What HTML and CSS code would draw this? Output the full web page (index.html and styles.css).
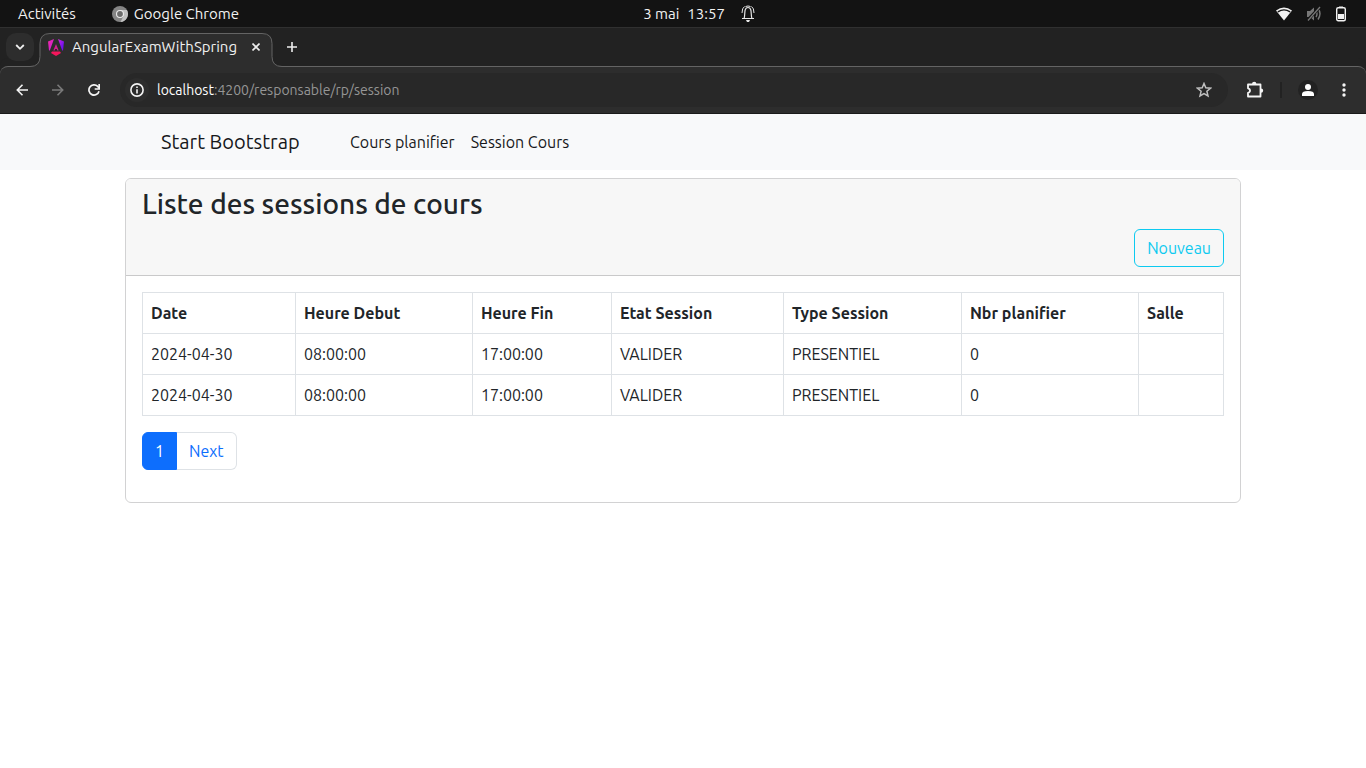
FILE: index.html
```html
<!DOCTYPE html>
<html lang="fr">
<head>
<meta charset="utf-8">
<meta name="viewport" content="width=device-width, initial-scale=1">
<title>AngularExamWithSpring</title>
<link rel="stylesheet" href="styles.css">
</head>
<body>
<header class="topbar">
  <div class="topbar-left">
    <button class="plain" type="button">Activités</button>
    <button class="plain app-menu" type="button">
      <svg width="16" height="16" viewBox="0 0 16 16"><circle cx="8" cy="8" r="8" fill="#858585"/><path d="M8 4h6.900a8 8 0 0 1-6.400 12l3-6z" fill="#c2c2c2"/><circle cx="8" cy="8" r="4" fill="#ececec"/><circle cx="8" cy="8" r="2.900" fill="#6c6c6c"/></svg>
      <span>Google Chrome</span>
    </button>
  </div>
  <button class="plain clock" type="button">
    <span>3 mai</span><span>13:57</span>
    <svg class="bell" width="14" height="18" viewBox="0 0 14 18" fill="none" stroke="#e6e6e6"><path d="M1 13.500h12M3 13.500c1-2 .5-7 1.300-9C4.800 3 6 2.500 7 2.500S9.200 3 9.700 4.500c.8 2 .3 7 1.300 9" stroke-width="1.200"/><path d="M3.500 1.500Q1 3 1 8M10.500 1.500Q13 3 13 8M4.500 1.500Q7 .5 9.500 1.500"/><path d="M5 15h4l-1 2H6z" fill="#e6e6e6" stroke="none"/></svg>
  </button>
  <div class="status">
    <svg width="16" height="14" viewBox="0 0 16 14"><path d="M0 3.500Q8-2.500 16 3.500L8 13.500z" fill="#f2f2f2"/><path d="M1.800 4.900Q8 .8 14.200 4.900" fill="none" stroke="#131313" stroke-width="1.300"/></svg>
    <svg width="16" height="16" viewBox="0 0 16 16"><path d="M1 5h3l4-3.500v13L4 11H1z" fill="#777"/><path d="M10 5q2 3 0 6M12 2.500q4 5 0 11" fill="none" stroke="#777" stroke-width="1.400"/><path d="M14 1L1 15" stroke="#131313" stroke-width="3"/><path d="M14 1L2 14.500" stroke="#777" stroke-width="1.300"/></svg>
    <svg width="10" height="16" viewBox="0 0 10 16"><path d="M3 .5h4V2H3z" fill="#f2f2f2"/><rect x=".7" y="1.700" width="8.600" height="13" rx="1.500" fill="none" stroke="#f2f2f2" stroke-width="1.400"/><path d="M2 8h6v5H2z" fill="#f2f2f2"/></svg>
  </div>
</header>

<div class="tabstrip">
  <button class="plain tab-search" type="button" aria-label="Rechercher dans les onglets">
    <svg width="10" height="8" viewBox="0 0 10 8" fill="none" stroke="#eee" stroke-width="1.800"><path d="M1.200 2L5 5.800 8.800 2"/></svg>
  </button>
  <div class="tab">
    <svg class="tab-shape" width="256" height="34" viewBox="0 0 256 34"><path d="M0 33.500h2q10 0 10-10V10.500Q12 .5 22 .5h212q10 0 10 10v13q0 10 10 10h2V34H0z" fill="#2d2d2d"/><path d="M0 33.500h2q10 0 10-10V10.500Q12 .5 22 .5h212q10 0 10 10v13q0 10 10 10h2" fill="none" stroke="#646464"/></svg>
    <svg class="favicon" width="16" height="17" viewBox="0 0 16 17"><defs><linearGradient id="ng" x1="0" x2="1" y2=".4"><stop offset="0" stop-color="#f0269b"/><stop offset=".55" stop-color="#d322e0"/><stop offset="1" stop-color="#7013ef"/></linearGradient></defs><path d="M0 2.500L6 0 1.800 11.500 1 11.500zM10 0l6 2.500-1 9h-.8z" fill="url(#ng)"/><path d="M8 5l2.700 6.500H9.300L8.800 10H7.200l-.5 1.500H5.300z" fill="#d02090"/><path d="M4 12.500h8l1 1.500-5 3-5-3z" fill="#f5165c"/></svg>
    <span class="tab-title">AngularExamWithSpring</span>
    <button class="plain" type="button" aria-label="Fermer l'onglet"><svg width="8" height="8" viewBox="0 0 8 8" stroke="#eee" stroke-width="1.600"><path d="M.5.5l7 7M7.500.5l-7 7"/></svg></button>
  </div>
  <button class="plain new-tab" type="button" aria-label="Nouvel onglet"><svg width="10" height="10" viewBox="0 0 10 10" stroke="#eee" stroke-width="1.600"><path d="M5 0v10M0 5h10"/></svg></button>
</div>

<div class="toolbar">
  <div class="nav-buttons">
    <button class="plain" type="button" aria-label="Retour"><svg width="12" height="12" viewBox="0 0 12 12" fill="none" stroke="#f4f4f4" stroke-width="1.600"><path d="M12 6H1.500M6.500.8L1.300 6l5.200 5.200"/></svg></button>
    <button class="plain" type="button" aria-label="Avancer"><svg width="12" height="12" viewBox="0 0 12 12" fill="none" stroke="#7a7a7a" stroke-width="1.600"><path d="M0 6h10.500M5.500.8L10.700 6l-5.200 5.200"/></svg></button>
    <button class="plain" type="button" aria-label="Actualiser"><svg width="12" height="12" viewBox="0 0 12 12" fill="none" stroke="#f4f4f4" stroke-width="1.700"><path d="M11 7.200A5.100 5.100 0 1 1 9.700 2.400L11 4"/><path d="M11.200 0v5H6.700"/></svg></button>
  </div>
  <div class="omnibox">
    <button class="plain site-info" type="button" aria-label="Informations sur le site"><svg width="14" height="14" viewBox="0 0 14 14"><circle cx="7" cy="7" r="6.100" fill="none" stroke="#f4f4f4" stroke-width="1.600"/><path d="M6.200 6.200h1.600V10.500H6.200zM6.200 3.500h1.600v1.600H6.200z" fill="#f4f4f4"/></svg></button>
    <a class="url" href="#"><span class="host">localhost</span>:4200/responsable/rp/session</a>
    <button class="plain" type="button" aria-label="Ajouter aux favoris"><svg width="16" height="16" viewBox="0 0 16 16" fill="none" stroke="#c0c0c0" stroke-width="1.500"><path d="M8 1.500l1.800 4.300 4.700.4-3.600 3.100 1.100 4.600L8 11.500l-4 2.400 1.100-4.600-3.600-3.100 4.700-.4z"/></svg></button>
  </div>
  <div class="actions">
    <button class="plain" type="button" aria-label="Extensions"><svg width="18" height="18" viewBox="0 0 18 18"><path d="M2 3.500h12.500V15.500H2v-3.700q2-.3 2-2.200T2 7.300z" fill="none" stroke="#f4f4f4" stroke-width="1.800" stroke-linejoin="round"/><path d="M6 3a2.200 2.200 0 0 1 4.400 0zM15 7.400a2.200 2.200 0 0 1 0 4.400z" fill="#f4f4f4"/></svg></button>
    <span class="separator"></span>
    <button class="plain profile" type="button" aria-label="Profil"><svg width="12" height="12" viewBox="0 0 12 12" fill="#fff"><circle cx="6" cy="3" r="3"/><path d="M0 12v-2q0-3 6-3t6 3v2z"/></svg></button>
    <button class="plain menu" type="button" aria-label="Menu"><svg width="4" height="14" viewBox="0 0 4 14" fill="#f4f4f4"><circle cx="2" cy="2" r="1.700"/><circle cx="2" cy="7" r="1.700"/><circle cx="2" cy="12" r="1.700"/></svg></button>
  </div>
</div>

<nav class="navbar">
  <div class="navbar-inner">
    <a class="brand" href="#">Start Bootstrap</a>
    <a class="nav-link" href="#">Cours planifier</a>
    <a class="nav-link" href="#">Session Cours</a>
  </div>
</nav>

<main class="container">
  <section class="card">
    <div class="card-header">
      <h3>Liste des sessions de cours</h3>
      <button class="btn-outline" type="button">Nouveau</button>
    </div>
    <div class="card-body">
      <table class="sessions">
        <colgroup><col class="c-date"><col class="c-start"><col class="c-end"><col class="c-state"><col class="c-type"><col class="c-count"><col class="c-room"></colgroup>
        <thead>
          <tr><th>Date</th><th>Heure Debut</th><th>Heure Fin</th><th>Etat Session</th><th>Type Session</th><th>Nbr planifier</th><th>Salle</th></tr>
        </thead>
        <tbody>
          <tr><td>2024-04-30</td><td>08:00:00</td><td>17:00:00</td><td>VALIDER</td><td>PRESENTIEL</td><td>0</td><td></td></tr>
          <tr><td>2024-04-30</td><td>08:00:00</td><td>17:00:00</td><td>VALIDER</td><td>PRESENTIEL</td><td>0</td><td></td></tr>
        </tbody>
      </table>
      <div class="pagination">
        <a class="page active" href="#">1</a>
        <a class="page" href="#">Next</a>
      </div>
    </div>
  </section>
</main>
</body>
</html>
```
FILE: styles.css
```css
* { box-sizing: border-box; }

body {
  margin: 0;
  background: #fff;
  color: #212529;
  font-family: Ubuntu, "Noto Sans", sans-serif;
  font-size: 16px;
  line-height: 24px;
}

svg { display: block; flex: none; }
a { color: inherit; text-decoration: none; }

.plain {
  display: flex;
  align-items: center;
  justify-content: center;
  padding: 0;
  border: 0;
  background: none;
  color: inherit;
  font: inherit;
}

/* Desktop bar */
.topbar {
  display: grid;
  grid-template-columns: 1fr auto 1fr;
  align-items: center;
  height: 28px;
  padding: 0 20px 0 18px;
  border-bottom: 1px solid #303030;
  background: #131313;
  color: #f2f2f2;
  font-size: 15px;
  line-height: 20px;
}
.topbar-left { display: flex; gap: 36px; }
.app-menu { gap: 6px; }
.clock { gap: 8px; padding-left: 34px; }
.bell { margin-left: 8px; }
.status { display: flex; align-items: center; justify-content: flex-end; gap: 14px; }

/* Browser tabs */
.tabstrip {
  display: flex;
  align-items: center;
  height: 38px;
  padding-left: 6px;
  background: #222;
  color: #f0f0f0;
}
.tab-search {
  width: 28px;
  height: 28px;
  border-radius: 10px;
  background: #2d2d2d;
}
.tab {
  position: relative;
  display: flex;
  align-items: center;
  gap: 8px;
  width: 232px;
  height: 28px;
  margin-left: 6px;
  padding: 0 12px 0 8px;
  font-size: 15px;
  line-height: 20px;
}
.tab-shape { position: absolute; left: -12px; top: 0; z-index: 1; }
.favicon, .tab-title, .tab .plain { position: relative; z-index: 2; }
.tab-title { flex: 1; white-space: nowrap; }
.new-tab { width: 28px; height: 28px; margin-left: 6px; }

/* Address bar */
.toolbar {
  display: flex;
  align-items: center;
  height: 48px;
  padding: 0 20px 0 16px;
  border-top: 1px solid #646464;
  border-bottom: 1px solid #1a1a1a;
  border-radius: 8px 8px 0 0;
  background: #2d2d2d;
  box-shadow: 0 -8px 0 #222;
}
.nav-buttons { display: flex; align-items: center; gap: 24px; }
.omnibox {
  display: flex;
  flex: 1;
  align-items: center;
  height: 34px;
  margin-left: 20px;
  padding: 0 16px 0 5px;
  border-radius: 17px;
  background: #282828;
}
.site-info { width: 24px; height: 24px; border-radius: 12px; background: #2d2d2d; }
.url {
  flex: 1;
  margin-left: 8px;
  color: #969696;
  font-size: 14px;
  line-height: 20px;
}
.host { color: #fff; }
.actions { display: flex; align-items: center; margin-left: 18px; }
.separator { width: 2px; height: 16px; margin: 0 16px; background: #222; }
.profile { width: 20px; height: 20px; border-radius: 10px; background: #222; }
.menu { margin-left: 24px; }

/* Site navigation */
.navbar { padding: 8px 0; background: #f8f9fa; }
.navbar-inner {
  display: flex;
  align-items: center;
  max-width: 1140px;
  margin: 0 auto;
  padding: 0 48px;
}
.brand {
  flex: none;
  width: 181px;
  font-size: 20px;
  line-height: 30px;
}
.nav-link { padding: 8px; }
.brand, .nav-link { color: #16181b; }

/* Session list */
.container {
  max-width: 1140px;
  margin: 8px auto 0;
  padding: 0 12px;
}
.card {
  border: 1px solid #d2d2d3;
  border-radius: 6px;
  overflow: hidden;
}
.card-header {
  display: flex;
  flex-direction: column;
  gap: 8px;
  padding: 8px 16px;
  border-bottom: 1px solid #c9c9ca;
  background: #f7f7f7;
}
.card-header h3 {
  margin: 0;
  font-size: 28px;
  font-weight: 550;
  line-height: 34px;
}
.btn-outline {
  align-self: flex-end;
  padding: 6px 12px;
  border: 1px solid #0dcaf0;
  border-radius: 6px;
  background: none;
  color: #0dcaf0;
  font: inherit;
}
.card-body { padding: 16px 16px 32px; }
.sessions {
  width: 100%;
  table-layout: fixed;
  border-collapse: collapse;
}
.sessions th, .sessions td {
  height: 41px;
  padding: 8px;
  border: 1px solid #dee2e6;
  text-align: left;
  white-space: nowrap;
}
.c-date { width: 14.15%; }
.c-start { width: 16.37%; }
.c-end { width: 12.86%; }
.c-state { width: 15.91%; }
.c-type { width: 16.47%; }
.c-count { width: 16.37%; }
.pagination { display: flex; margin-top: 16px; }
.page {
  padding: 6px 12px;
  border: 1px solid #dee2e6;
  border-left: 0;
  border-radius: 0 6px 6px 0;
  color: #0d6efd;
}
.page.active {
  border: 1px solid #0d6efd;
  border-radius: 6px 0 0 6px;
  background: #0d6efd;
  color: #fff;
}
```
